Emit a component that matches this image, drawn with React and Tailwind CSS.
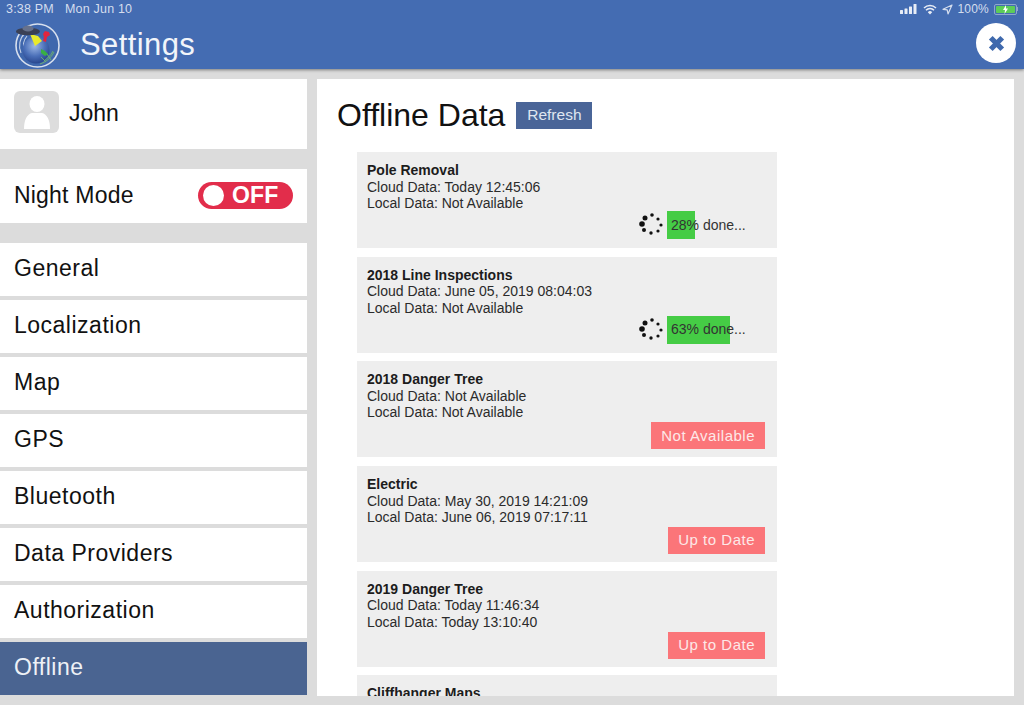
import { X } from 'lucide-react'

const menuItems = ['General', 'Localization', 'Map', 'GPS', 'Bluetooth', 'Data Providers', 'Authorization', 'Offline']

const datasets = [
  { name: 'Pole Removal', cloud: 'Today 12:45:06', local: 'Not Available', progress: 28 },
  { name: '2018 Line Inspections', cloud: 'June 05, 2019 08:04:03', local: 'Not Available', progress: 63 },
  { name: '2018 Danger Tree', cloud: 'Not Available', local: 'Not Available', status: 'Not Available' },
  { name: 'Electric', cloud: 'May 30, 2019 14:21:09', local: 'June 06, 2019 07:17:11', status: 'Up to Date' },
  { name: '2019 Danger Tree', cloud: 'Today 11:46:34', local: 'Today 13:10:40', status: 'Up to Date' },
  { name: 'Cliffhanger Maps' }
]

// viewBox uses page coordinates so the shapes line up with the reference
const Logo = () => (
  <svg width="48" height="46" viewBox="13 21 48 46" className="shrink-0">
    <defs>
      <radialGradient id="globe" cx="45%" cy="35%" r="70%">
        <stop offset="0%" stopColor="#9db8e6" />
        <stop offset="55%" stopColor="#4a6fb8" />
        <stop offset="100%" stopColor="#233f86" />
      </radialGradient>
    </defs>
    <circle cx="37.500" cy="44.500" r="21.500" fill="#3f67ad" stroke="#d8e0ee" strokeWidth="1.600" />
    <path d="M21 52a18 18 0 0 1 4-20M25 50a14 14 0 0 1 2-15" fill="none" stroke="#c5d2e8" strokeWidth="1.100" />
    <circle cx="36" cy="49" r="13.500" fill="url(#globe)" />
    <path d="M40 63c6-2 11-6 14-12M44 60c3-3 7-5 9-10M47 53l4 6M41 56l5 5" fill="none" stroke="#6fb46a" strokeWidth="0.900" />
    <path d="M30 33l8 2 4 5-7 5z" fill="#eaea2c" />
    <ellipse cx="28" cy="30.500" rx="12" ry="3.800" fill="#3a4055" />
    <ellipse cx="28" cy="27.500" rx="5.500" ry="3" fill="#66718c" />
    <path d="M45 30l4 1 1 3-3 2-1 5-3-1 1-4-1-3z" fill="#e1243f" />
    <path d="M41 48l4 2 3 3-3 2-4-3z" fill="#39b043" />
  </svg>
)

const StatusIcons = () => (
  <div className="flex items-center gap-[5px]">
    <svg width="18" height="10" viewBox="0 0 18 10" fill="#e8edf6">
      <rect x="0" y="6" width="3" height="4" rx="0.5" />
      <rect x="4.500" y="4.500" width="3" height="5.500" rx="0.5" />
      <rect x="9" y="2.500" width="3" height="7.500" rx="0.5" />
      <rect x="13.500" y="0" width="3" height="10" rx="0.5" />
    </svg>
    <svg width="14" height="11" viewBox="0 0 14 11" fill="none" stroke="#e8edf6" strokeWidth="1.500">
      <path d="M1 4a8.500 8.500 0 0 1 12 0M3 6.300a5.300 5.300 0 0 1 8 0" />
      <path d="M7 10.500L4.800 8.300a3 3 0 0 1 4.400 0z" fill="#e8edf6" stroke="none" />
    </svg>
    <svg width="11" height="11" viewBox="0 0 11 11" fill="none" stroke="#d5deee" strokeWidth="1.200">
      <path d="M10 1L1 5.300l4.200.6.800 4z" strokeLinejoin="round" />
    </svg>
    <span className="text-[12px] text-[#d5deee] tracking-[0.2px]">100%</span>
    <div className="flex items-center">
      <div className="relative w-[23px] h-[11px] rounded-[2px] border border-[#8fa7cc] p-[1px]">
        <div className="h-full w-full bg-[#5ccc58] rounded-[1px]" />
        <svg width="7" height="9" viewBox="0 0 7 9" className="absolute left-[7px] top-0" fill="#fff">
          <path d="M4 0L1 5h2L2.500 9 6 3.500H4z" />
        </svg>
      </div>
      <div className="w-[1px] h-[4px] bg-[#8fa7cc]" />
    </div>
  </div>
)

const Spinner = () => {
  const dots = [
    [4, 13, 2.8], [7, 7, 2.500], [14, 4, 1.800], [20, 8, 1.600],
    [23, 14, 1.600], [20, 20, 1.600], [13, 22, 1.700], [6, 19, 2]
  ]
  return (
    <svg width="26" height="28" viewBox="0 0 26 28" className="mr-[3px]">
      {dots.map(([cx, cy, r]) => (
        <circle key={`${cx}-${cy}`} cx={cx} cy={cy} r={r} fill="#111" />
      ))}
    </svg>
  )
}

const Progress = ({ value }) => (
  <div className="flex items-center h-[28px] mb-[9px] mr-[10px]">
    <Spinner />
    <div className="relative w-[100px] h-[28px] flex items-center pl-[4px] text-[14px] text-[#333]">
      <div className="absolute left-0 top-0 h-full bg-[#45cc45]" style={{ width: `${value}%` }} />
      <span className="relative">{value}% done...</span>
    </div>
  </div>
)

const DataCard = ({ item }) => (
  <div className="relative h-[96px] shrink-0 bg-[#eeeeee] pl-[10px] pt-[10px] text-[14px] leading-[16.500px] text-[#2b2b2b] flex">
    <div className="flex-1">
      <div className="font-bold text-[#1c1c1c]">{item.name}</div>
      {item.cloud && <div>Cloud Data: {item.cloud}</div>}
      {item.local && <div>Local Data: {item.local}</div>}
    </div>
    <div className="absolute right-0 bottom-0 flex items-end">
      {item.progress && <Progress value={item.progress} />}
      {item.status && (
        <div className="h-[27px] px-[10px] mb-[8px] mr-[12px] flex items-center bg-[#fb7579] text-[#fde8e8] text-[15px] tracking-[0.5px]">
          {item.status}
        </div>
      )}
    </div>
  </div>
)

const App = () => {
  return (
    <div className="h-[705px] w-[1024px] overflow-hidden flex flex-col bg-[#dcdcdc] font-['Liberation_Sans',Arial,sans-serif] text-[#111]">
      {/* Header */}
      <header className="relative h-[69px] shrink-0 bg-[#446cb2] shadow-[0_1px_3px_rgba(0,0,0,0.45)] pl-[5px] pr-[6px] pt-[2px]">
        <div className="flex justify-between items-center h-[14px] text-[12.500px] text-[#d5deee]">
          <div className="flex gap-[11px] tracking-[0.2px] pl-[1px]">
            <span>3:38 PM</span>
            <span>Mon Jun 10</span>
          </div>
          <StatusIcons />
        </div>
        <div className="flex items-center justify-between pl-[8px] pr-[2px] mt-[5px]">
          <div className="flex items-center gap-[19px]">
            <Logo />
            <span className="text-[31px] text-[#f2f5fa] tracking-[0.4px] mt-[1px]">Settings</span>
          </div>
          <button className="w-[40px] h-[40px] rounded-full bg-white flex items-center justify-center -mt-[3px]">
            <X size={23} strokeWidth={5.500} color="#3f69ad" strokeLinecap="butt" />
          </button>
        </div>
      </header>

      <div className="flex-1 min-h-0 flex pt-[10px] pb-[9px] pr-[10px]">
        {/* Sidebar */}
        <aside className="w-[307px] shrink-0 flex flex-col">
          <div className="h-[70px] bg-white flex items-center gap-[10px] pl-[14px] pb-[5px] text-[23px]">
            <div className="w-[45px] h-[42px] rounded-[6px] bg-[#dddddd] flex items-center justify-center">
              <svg width="28" height="34" viewBox="0 0 28 34" fill="#fff">
                <ellipse cx="14" cy="9" rx="7.500" ry="8" />
                <path d="M1 34c0-9 3-15 8-16h10c5 1 8 7 8 16z" />
              </svg>
            </div>
            <span className="mt-[3px]">John</span>
          </div>
          <div className="h-[54px] mt-[20px] bg-white flex items-center justify-between pl-[14px] pr-[14px] text-[23px] tracking-[0.2px]">
            <span className="-mt-[2px]">Night Mode</span>
            <div className="w-[95px] h-[27px] -mt-[1px] rounded-full bg-[#e22d4b] flex items-center pl-[5px] gap-[8px]">
              <div className="w-[21px] h-[21px] rounded-full bg-white" />
              <span className="text-white font-bold text-[23px] leading-none">OFF</span>
            </div>
          </div>
          <nav className="mt-[19.500px] flex flex-col gap-[3.500px]">
            {menuItems.map((label) => (
              <div
                key={label}
                className={`h-[53.500px] flex items-center pl-[14px] pb-[2px] text-[23px] tracking-[0.5px] ${
                  label === 'Offline' ? 'bg-[#4a6491] text-[#eef1f6]' : 'bg-white'
                }`}
              >
                {label}
              </div>
            ))}
          </nav>
        </aside>

        {/* Main panel */}
        <main className="flex-1 ml-[10px] bg-white overflow-hidden pl-[20px] pt-[18px]">
          <div className="flex items-center gap-[11px] h-[36px]">
            <h1 className="text-[32px] leading-none text-[#111]">Offline Data</h1>
            <button className="w-[76px] h-[27px] bg-[#4a6598] text-[#dfe5f0] text-[15.500px] flex items-center justify-center">
              Refresh
            </button>
          </div>
          <div className="w-[420px] ml-[20px] mt-[19px] flex flex-col gap-[8.700px]">
            {datasets.map((item) => (
              <DataCard key={item.name} item={item} />
            ))}
          </div>
        </main>
      </div>
    </div>
  )
}

export default App
